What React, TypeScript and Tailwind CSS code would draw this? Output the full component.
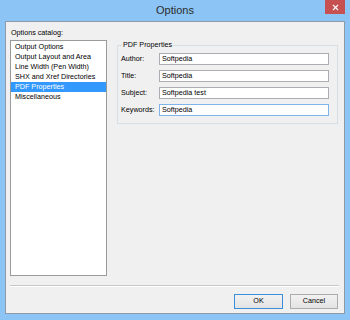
import { X } from "lucide-react";

const catalog = [
  "Output Options",
  "Output Layout and Area",
  "Line Width (Pen Width)",
  "SHX and Xref Directories",
  "PDF Properties",
  "Miscellaneous",
];

const fields = [
  { label: "Author:", value: "Softpedia" },
  { label: "Title:", value: "Softpedia" },
  { label: "Subject:", value: "Softpedia test" },
  { label: "Keywords:", value: "Softpedia", focused: true },
];

const uiFont = "font-['Liberation_Sans',Arial,sans-serif] text-[7.2px] text-black";

export default function App() {
  return (
    <div className="flex h-[320px] w-[350px] flex-col bg-[#8cc5f5] font-['Liberation_Sans',Arial,sans-serif]">
      {/* title bar */}
      <div className="relative flex h-[21px] shrink-0 items-center justify-center">
        <span className="text-[11px] leading-none text-[#2b2b2b]">Options</span>
        <div className="absolute right-[5px] top-0 flex h-[14px] w-[20px] items-center justify-center bg-[#c75050]">
          <X className="h-[9px] w-[9px] text-white" strokeWidth={3} />
        </div>
      </div>

      {/* client area */}
      <div className={`mx-[5px] mb-[6px] flex flex-1 flex-col border border-[#8e9aa6] bg-[#f0f0f0] ${uiFont}`}>
        <div className="ml-[5px] mt-[4px] h-[14px] leading-[13px]">Options catalog:</div>

        <div className="flex px-[4px]">
          <div className="h-[236px] w-[97px] shrink-0 border border-[#9a9a9a] bg-white pt-[1px]">
            {catalog.map((item, i) => (
              <div
                key={item}
                className={`h-[10px] px-[4px] leading-[10px] ${i === 4 ? "bg-[#3399ff] text-white" : ""}`}
              >
                {item}
              </div>
            ))}
          </div>

          <fieldset className="ml-[10px] mt-[0px] h-[84px] w-[221px] border border-[#d5dfe5] px-[3px] pb-[4px]">
            <legend className="ml-[1px] px-[1px] leading-[10px]">PDF Properties</legend>
            <div className="mt-[3px] flex flex-col gap-[5px]">
              {fields.map((f) => (
                <div key={f.label} className="flex h-[12px] items-center">
                  <span className="w-[38px] shrink-0">{f.label}</span>
                  <div
                    className={`flex h-[12px] w-[170px] items-center border bg-white px-[2px] ${
                      f.focused ? "border-[#7eb4ea]" : "border-[#abadb3]"
                    }`}
                  >
                    {f.value}
                  </div>
                </div>
              ))}
            </div>
          </fieldset>
        </div>

        <div className="ml-[4px] mr-[5px] mt-[9px] border-t border-b border-t-[#c8c8c8] border-b-white" />

        <div className="mt-[7px] flex justify-end gap-[7px] pr-[6px]">
          <div className="flex h-[15px] w-[49px] items-center justify-center border border-[#3c8fd8] bg-gradient-to-b from-[#f2f2f2] to-[#e3e3e3]">
            OK
          </div>
          <div className="flex h-[15px] w-[48px] items-center justify-center border border-[#acacac] bg-gradient-to-b from-[#f2f2f2] to-[#e3e3e3]">
            Cancel
          </div>
        </div>
      </div>
    </div>
  );
}
